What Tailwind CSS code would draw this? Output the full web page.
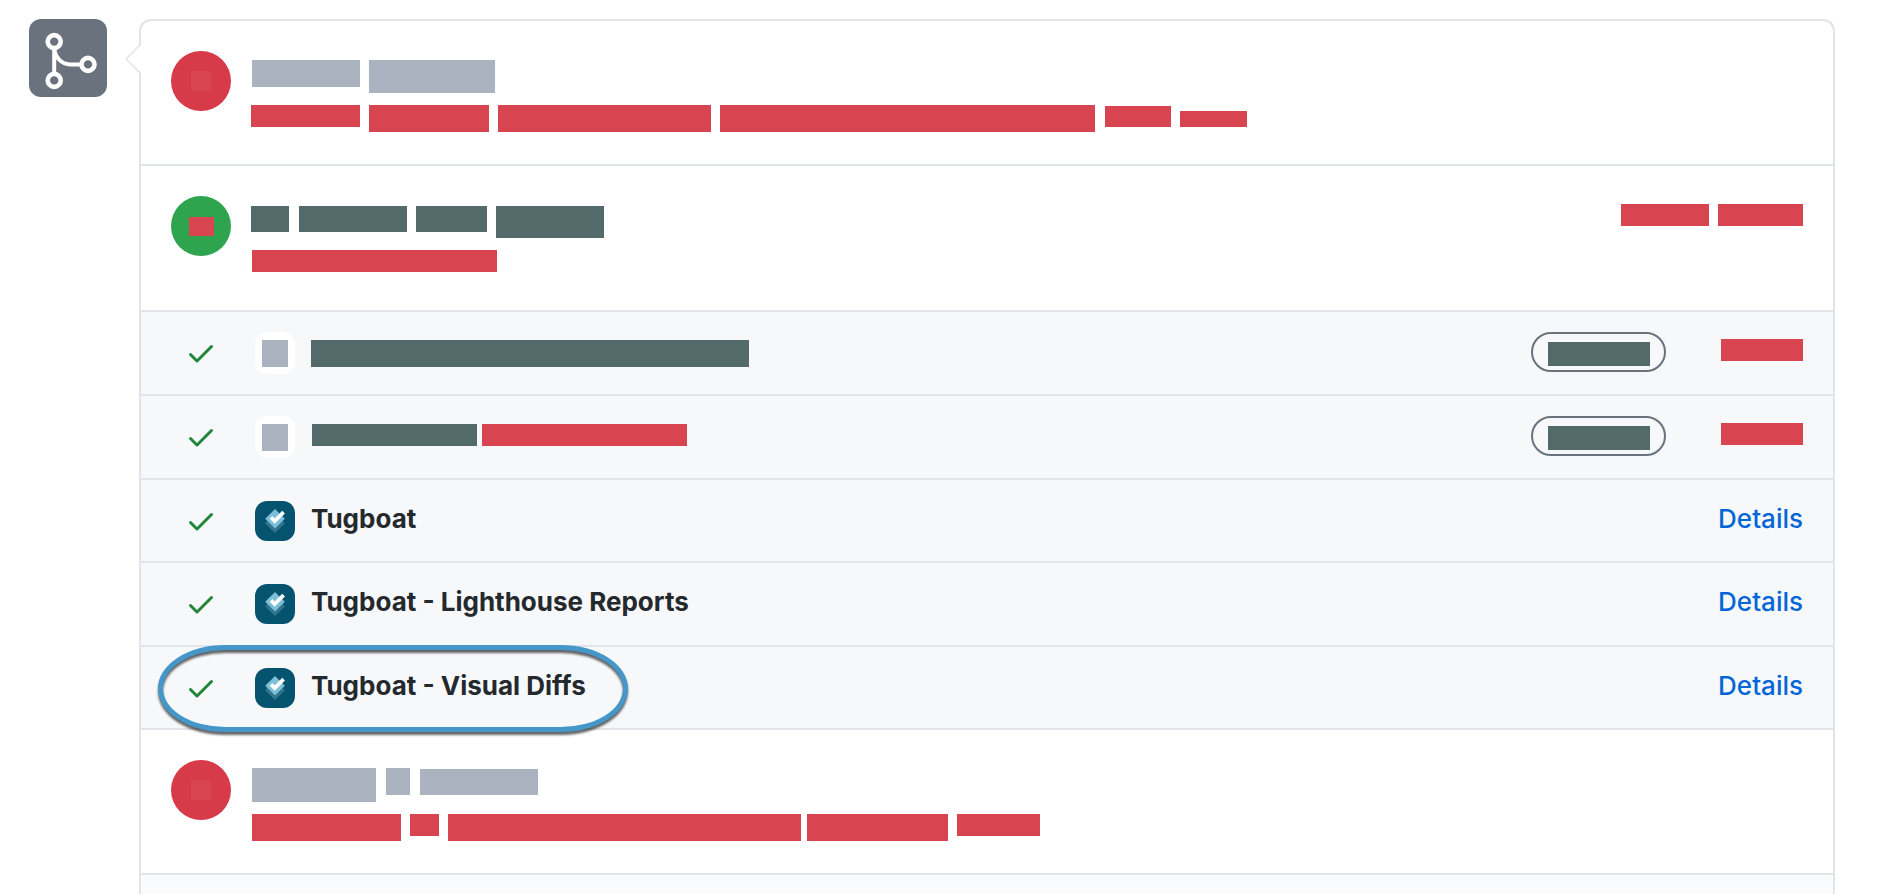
<!DOCTYPE html>
<html lang="en">
<head>
<meta charset="utf-8">
<meta name="viewport" content="width=device-width, initial-scale=1">
<title>Merge status</title>
<script src="https://cdn.jsdelivr.net/npm/@tailwindcss/browser@4"></script>
</head>
<body class="min-h-screen bg-white font-['Inter','Liberation_Sans',sans-serif] text-[#24292e]">
<svg class="hidden" aria-hidden="true">
  <symbol id="check" viewBox="0 0 16 16"><path fill="currentColor" d="M13.78 4.22a.75.75 0 010 1.06l-7.25 7.25a.75.75 0 01-1.06 0L2.22 9.28a.75.75 0 011.06-1.06L6 10.94l6.72-6.72a.75.75 0 011.06 0z"/></symbol>
  <symbol id="tugboat" viewBox="0 0 40 40">
    <rect width="40" height="40" fill="#06536f"/>
    <path fill="#31748c" d="M20 12.500L30 22.300L20 32L10 22.300Z"/>
    <path fill="#7bbfd8" d="M20 8L29.800 17.700L20 27.500L10.200 17.700Z"/>
    <path fill="none" stroke="#fff" stroke-width="3.800" d="M16 16.300L19.700 20L28.600 11.200"/>
  </symbol>
</svg>
<main class="flex min-h-screen items-start gap-8 pt-[19px] pr-[45px] pl-[29px]">
  <div class="flex size-[78px] shrink-0 items-center justify-center rounded-xl bg-[#6a737d]">
    <svg class="size-[78px]" viewBox="0 0 78 78" fill="none" stroke="#fff" stroke-width="4.600" role="img" aria-label="Pull request merge">
      <circle cx="25.200" cy="22.600" r="6.500"/><circle cx="25.200" cy="61.400" r="6.500"/><circle cx="59" cy="45.400" r="6.500"/>
      <path stroke-width="4" d="M25.200 29V55M25.200 29C26 39 33 45.400 41 45.400H52.500"/>
    </svg>
  </div>
  <div class="relative flex min-h-[875px] min-w-0 flex-1 flex-col rounded-t-xl border-2 border-b-0 border-[#e1e4e8]">
    <svg class="absolute top-6 -left-4 h-7 w-4" viewBox="0 0 16 28" aria-hidden="true"><path d="M16 0L1 14L16 28Z" fill="#fff"/><path d="M15 0L1 14L15 28" fill="none" stroke="#e1e4e8" stroke-width="1.500"/></svg>

    <section class="flex h-[145px] items-start gap-5 border-b-2 border-[#e1e4e8] px-[30px] pt-[30px]">
      <div class="flex size-[60px] shrink-0 items-center justify-center rounded-full bg-[#d73a49]"><span class="size-5 bg-[#d84450]"></span></div>
      <div class="flex flex-col gap-3 pt-[9px]">
        <div class="flex items-start gap-[9px] pl-px"><span class="h-[27px] w-[108px] bg-[#abb2c0]"></span><span class="h-[33px] w-[126px] bg-[#abb2c0]"></span></div>
        <div class="flex items-start gap-[9px]">
          <span class="h-[22px] w-[109px] bg-[#d84450]"></span><span class="h-[27px] w-[120px] bg-[#d84450]"></span><span class="h-[27px] w-[213px] bg-[#d84450]"></span><span class="h-[27px] w-[375px] bg-[#d84450]"></span>
          <span class="flex h-[22px] items-end gap-[9px] pl-px"><span class="h-[21px] w-[66px] bg-[#d84450]"></span><span class="h-4 w-[67px] bg-[#d84450]"></span></span>
        </div>
      </div>
    </section>

    <section class="flex h-[146px] items-start gap-5 border-b-2 border-[#e1e4e8] px-[30px] pt-[30px]">
      <div class="flex size-[60px] shrink-0 items-center justify-center rounded-full bg-[#2ea44f]"><span class="h-[19px] w-[25px] bg-[#d84450]"></span></div>
      <div class="flex flex-col gap-3 pt-[10px]">
        <div class="flex items-start gap-[9px]"><span class="mr-px h-[26px] w-[38px] bg-[#526b6a]"></span><span class="h-[26px] w-[108px] bg-[#526b6a]"></span><span class="h-[26px] w-[71px] bg-[#526b6a]"></span><span class="h-8 w-[108px] bg-[#526b6a]"></span></div>
        <div class="flex pl-px"><span class="h-[22px] w-[245px] bg-[#d84450]"></span></div>
      </div>
      <div class="ml-auto flex gap-[9px] pt-2"><span class="h-[22px] w-[88px] bg-[#d84450]"></span><span class="h-[22px] w-[85px] bg-[#d84450]"></span></div>
    </section>

    <ul class="bg-[#f6f8fa] text-[26px] leading-10">
      <li class="flex h-[84px] items-center border-b-2 border-[#e1e4e8] pr-[30px] pl-11">
        <svg class="size-8 text-[#22863a]"><use href="#check"/></svg>
        <span class="ml-[38px] flex h-[42px] w-10 items-center justify-center rounded-xl bg-white"><span class="h-[27px] w-[26px] bg-[#abb2c0]"></span></span>
        <span class="ml-4 h-[27px] w-[438px] bg-[#526b6a]"></span>
        <span class="mb-0.5 ml-auto flex h-10 w-[135px] items-center justify-center rounded-full border-2 border-[#6a737d] pt-1"><span class="h-6 w-[102px] bg-[#526b6a]"></span></span>
        <span class="mb-1.5 ml-[55px] h-[22px] w-[82px] bg-[#d84450]"></span>
      </li>
      <li class="flex h-[84px] items-center border-b-2 border-[#e1e4e8] pr-[30px] pl-11">
        <svg class="size-8 text-[#22863a]"><use href="#check"/></svg>
        <span class="ml-[38px] flex h-[42px] w-10 items-center justify-center rounded-xl bg-white"><span class="h-[27px] w-[26px] bg-[#abb2c0]"></span></span>
        <span class="ml-[17px] flex gap-[5px] pb-1"><span class="h-[22px] w-[165px] bg-[#526b6a]"></span><span class="h-[22px] w-[205px] bg-[#d84450]"></span></span>
        <span class="mb-0.5 ml-auto flex h-10 w-[135px] items-center justify-center rounded-full border-2 border-[#6a737d] pt-1"><span class="h-6 w-[102px] bg-[#526b6a]"></span></span>
        <span class="mb-1.5 ml-[55px] h-[22px] w-[82px] bg-[#d84450]"></span>
      </li>
      <li class="flex h-[83px] items-center border-b-2 border-[#e1e4e8] pr-[30px] pl-11">
        <svg class="size-8 text-[#22863a]"><use href="#check"/></svg>
        <svg class="ml-[38px] size-10 rounded-xl"><use href="#tugboat"/></svg>
        <strong class="ml-4 pb-1 font-bold">Tugboat</strong>
        <a href="#tugboat-details" class="ml-auto pb-1 font-medium text-[#0366d6]">Details</a>
      </li>
      <li class="flex h-[84px] items-center border-b-2 border-[#e1e4e8] pr-[30px] pl-11">
        <svg class="size-8 text-[#22863a]"><use href="#check"/></svg>
        <svg class="ml-[38px] size-10 rounded-xl"><use href="#tugboat"/></svg>
        <strong class="ml-4 pb-1 font-bold">Tugboat - Lighthouse Reports</strong>
        <a href="#lighthouse-details" class="ml-auto pb-1 font-medium text-[#0366d6]">Details</a>
      </li>
      <li class="relative flex h-[83px] items-center border-b-2 border-[#e1e4e8] pr-[30px] pl-11">
        <svg class="size-8 text-[#22863a]"><use href="#check"/></svg>
        <svg class="ml-[38px] size-10 rounded-xl"><use href="#tugboat"/></svg>
        <strong class="ml-4 pb-1 font-bold">Tugboat - Visual Diffs</strong>
        <a href="#visual-details" class="ml-auto pb-1 font-medium text-[#0366d6]">Details</a>
        <span class="pointer-events-none absolute -top-0.5 left-[17px] h-[87px] w-[470px] rounded-[68px/44px] border-5 border-[#4596c9] drop-shadow-[0_3px_1px_rgba(0,0,0,0.6)]"></span>
      </li>
    </ul>

    <section class="flex h-[145px] items-start gap-5 border-b-2 border-[#e1e4e8] px-[30px] pt-[30px]">
      <div class="flex size-[60px] shrink-0 items-center justify-center rounded-full bg-[#d73a49]"><span class="size-5 bg-[#d84450]"></span></div>
      <div class="flex flex-col gap-3 pt-2 pl-px">
        <div class="flex items-start gap-[10px]"><span class="h-[34px] w-[124px] bg-[#abb2c0]"></span><span class="h-[27px] w-6 bg-[#abb2c0]"></span><span class="mt-px h-[26px] w-[118px] bg-[#abb2c0]"></span></div>
        <div class="flex items-start gap-[9px]"><span class="h-[27px] w-[149px] bg-[#d84450]"></span><span class="h-[22px] w-[29px] bg-[#d84450]"></span><span class="flex gap-1.5"><span class="h-[27px] w-[353px] bg-[#d84450]"></span><span class="h-[27px] w-[141px] bg-[#d84450]"></span></span><span class="h-[22px] w-[83px] bg-[#d84450]"></span></div>
      </div>
    </section>
    <div class="flex-1 bg-[#fafbfc]"></div>
  </div>
</main>
</body>
</html>
